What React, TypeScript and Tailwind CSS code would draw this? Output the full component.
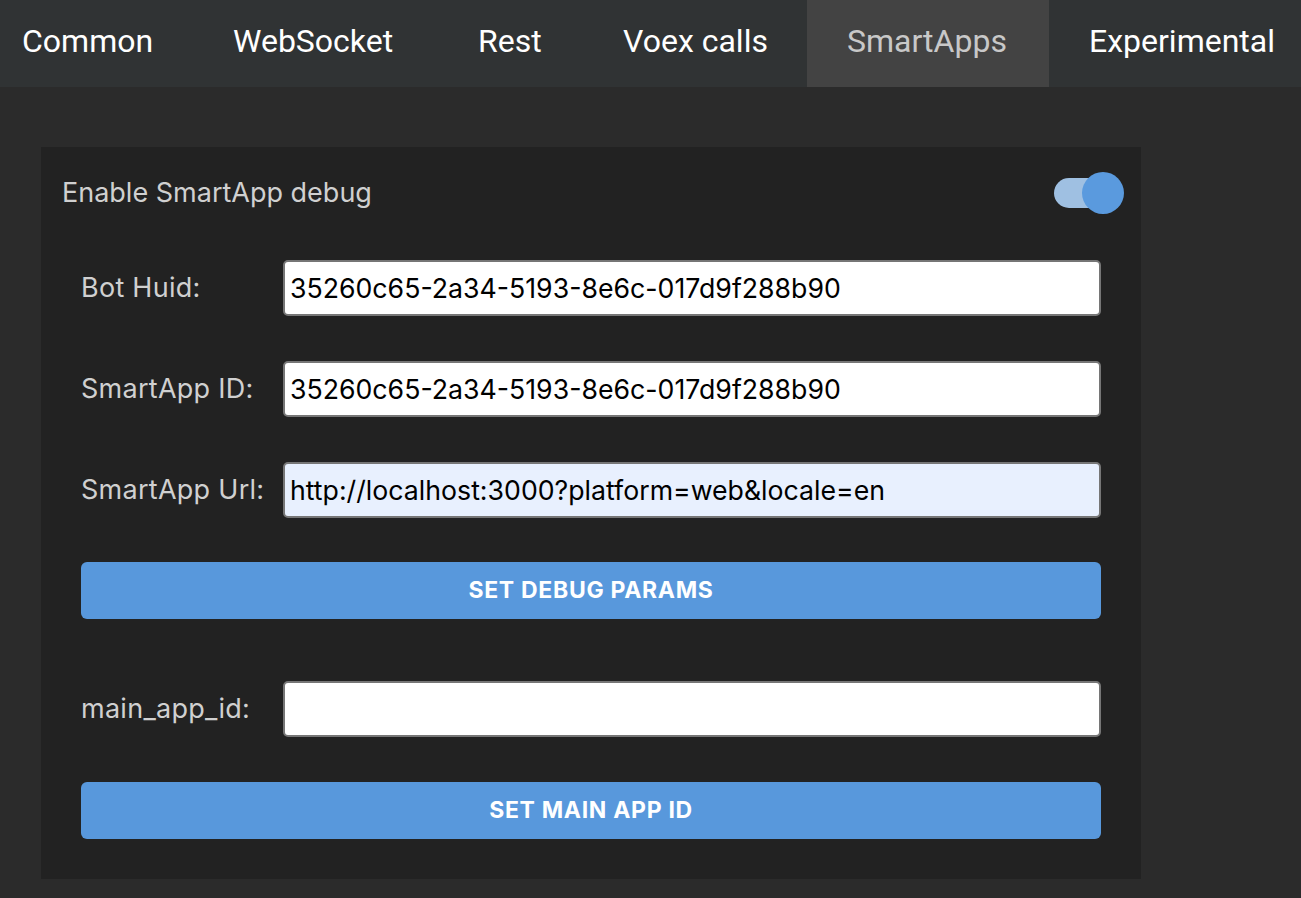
import React, { useState } from 'react';

const tabs = [
    { name: 'Common', w: 'w-[192px] pl-[22px]' },
    { name: 'WebSocket', w: 'w-[245px] pl-[41px]' },
    { name: 'Rest', w: 'w-[145px] pl-[41px]' },
    { name: 'Voex calls', w: 'w-[225px] pl-[41px]' },
    { name: 'SmartApps', w: 'w-[242px] pl-[40px]' },
    { name: 'Experimental', w: 'w-[260px] pl-[40px]' },
];

const Field: React.FC<{ label: string; value: string; autofill?: boolean }> = ({ label, value, autofill }) => (
    <div className="flex items-center">
        <label className="w-[202px] shrink-0 text-[27px] tracking-[0.01em] text-[#d0d0d0]">{label}</label>
        <input
            readOnly
            value={value}
            className={`h-[56px] flex-1 rounded-[5px] border-2 border-[#767676] px-[5px] text-[26.7px] text-black outline-none ${autofill ? 'bg-[#e8f0fe]' : 'bg-white'}`}
        />
    </div>
);

const Btn: React.FC<{ children: React.ReactNode }> = ({ children }) => (
    <button className="h-[57px] w-full rounded-[6px] bg-[#5898dc] text-[23px] font-bold uppercase tracking-[0.03em] text-white">
        {children}
    </button>
);

export default function App() {
    const [active] = useState('SmartApps');
    return (
        <div className="min-h-[898px] w-full bg-[#2b2b2b]" style={{ fontFamily: 'Inter, "Noto Sans", sans-serif' }}>
            {/* Tabs */}
            <div className="flex h-[87px] overflow-hidden bg-[#303334]" style={{ fontFamily: 'Roboto, sans-serif' }}>
                {tabs.map((t) => (
                    <div
                        key={t.name}
                        className={`flex shrink-0 items-center whitespace-nowrap pb-[6px] text-[32px] ${t.w} ${t.name === active ? 'bg-[#434343] text-[#c8c8c8]' : 'text-white'}`}
                    >
                        {t.name}
                    </div>
                ))}
            </div>

            {/* Panel */}
            <div className="ml-[41px] mt-[60px] w-[1100px] bg-[#222222] pb-[40px] pt-[25px]">
                <div className="flex h-[42px] items-center justify-between pl-[21px] pr-[17px]">
                    <span className="text-[27px] text-[#d0d0d0]">Enable SmartApp debug</span>
                    <div className="relative h-[42px] w-[70px]">
                        <div className="absolute left-0 top-[6px] h-[30px] w-[56px] rounded-full bg-[#9fc0e2]" />
                        <div className="absolute right-0 top-0 h-[42px] w-[42px] rounded-full bg-[#5a9ade]" />
                    </div>
                </div>

                <div className="mt-[46px] flex flex-col px-[40px]">
                    <div className="flex flex-col gap-[45px]">
                        <Field label="Bot Huid:" value="35260c65-2a34-5193-8e6c-017d9f288b90" />
                        <Field label="SmartApp ID:" value="35260c65-2a34-5193-8e6c-017d9f288b90" />
                        <Field label="SmartApp Url:" value="http://localhost:3000?platform=web&locale=en" autofill />
                    </div>
                    <div className="mt-[44px]">
                        <Btn>Set debug params</Btn>
                    </div>
                    <div className="mt-[62px]">
                        <Field label="main_app_id:" value="" />
                    </div>
                    <div className="mt-[45px]">
                        <Btn>Set main app id</Btn>
                    </div>
                </div>
            </div>
        </div>
    );
}
